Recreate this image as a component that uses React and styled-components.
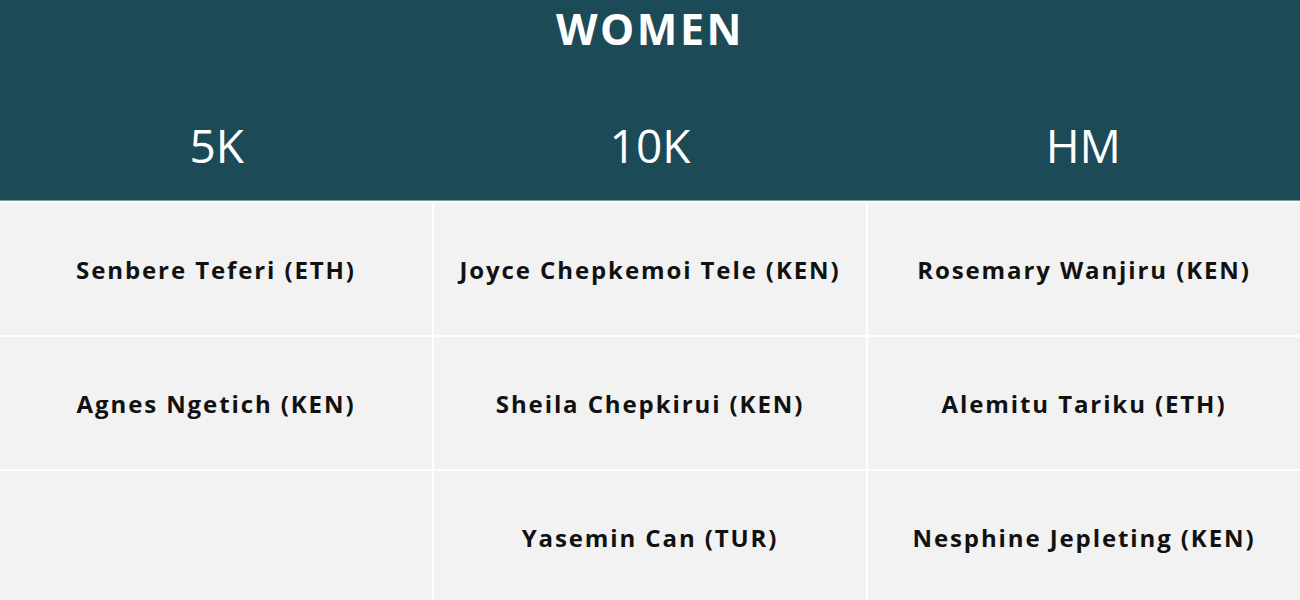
import React from 'react';
import styled, { createGlobalStyle } from 'styled-components';

const GlobalStyle = createGlobalStyle`
  html, body {
    margin: 0;
    padding: 0;
    background: #ffffff;
  }
`;

const Page = styled.div`
  width: 1300px;
  height: 600px;
  overflow: hidden;
  font-family: "Open Sans", "Liberation Sans", sans-serif;
`;

const Header = styled.header`
  background: #1d4a57;
  height: 200px;
  border-bottom: 1px solid #7f98a0;
  display: flex;
  flex-direction: column;
  align-items: center;
`;

const Title = styled.h1`
  margin: 0;
  color: #ffffff;
  font-size: 43px;
  font-weight: 700;
  letter-spacing: 2.5px;
  line-height: 58px;
`;

const HeadRow = styled.div`
  width: 100%;
  display: grid;
  grid-template-columns: repeat(3, 1fr);
  margin-top: 62px;
`;

const HeadCell = styled.div`
  text-align: center;
  color: #ffffff;
  font-size: 46px;
  font-weight: 400;
  line-height: 50px;
`;

const Body = styled.div`
  display: grid;
  grid-template-columns: 432px 432px 432px;
  grid-auto-rows: 132px;
  gap: 2px 2px;
  padding-top: 2px;
  background: #ffffff;
`;

const Cell = styled.div`
  background: #f2f2f2;
  display: flex;
  align-items: center;
  justify-content: center;
  color: #111111;
  font-size: 24px;
  font-weight: 700;
  letter-spacing: 1.9px;
`;

const columns = ['5K', '10K', 'HM'];

const rows = [
  ['Senbere Teferi (ETH)', 'Joyce Chepkemoi Tele (KEN)', 'Rosemary Wanjiru (KEN)'],
  ['Agnes Ngetich (KEN)', 'Sheila Chepkirui (KEN)', 'Alemitu Tariku (ETH)'],
  ['', 'Yasemin Can (TUR)', 'Nesphine Jepleting (KEN)'],
];

const App = () => {
  return (
    <Page>
      <GlobalStyle />
      <Header>
        <Title>WOMEN</Title>
        <HeadRow>
          {columns.map(c => (
            <HeadCell key={c}>{c}</HeadCell>
          ))}
        </HeadRow>
      </Header>
      <Body>
        {rows.map((row, i) =>
          row.map((name, j) => <Cell key={`${i}-${j}`}>{name}</Cell>)
        )}
      </Body>
    </Page>
  );
};

export default App;
